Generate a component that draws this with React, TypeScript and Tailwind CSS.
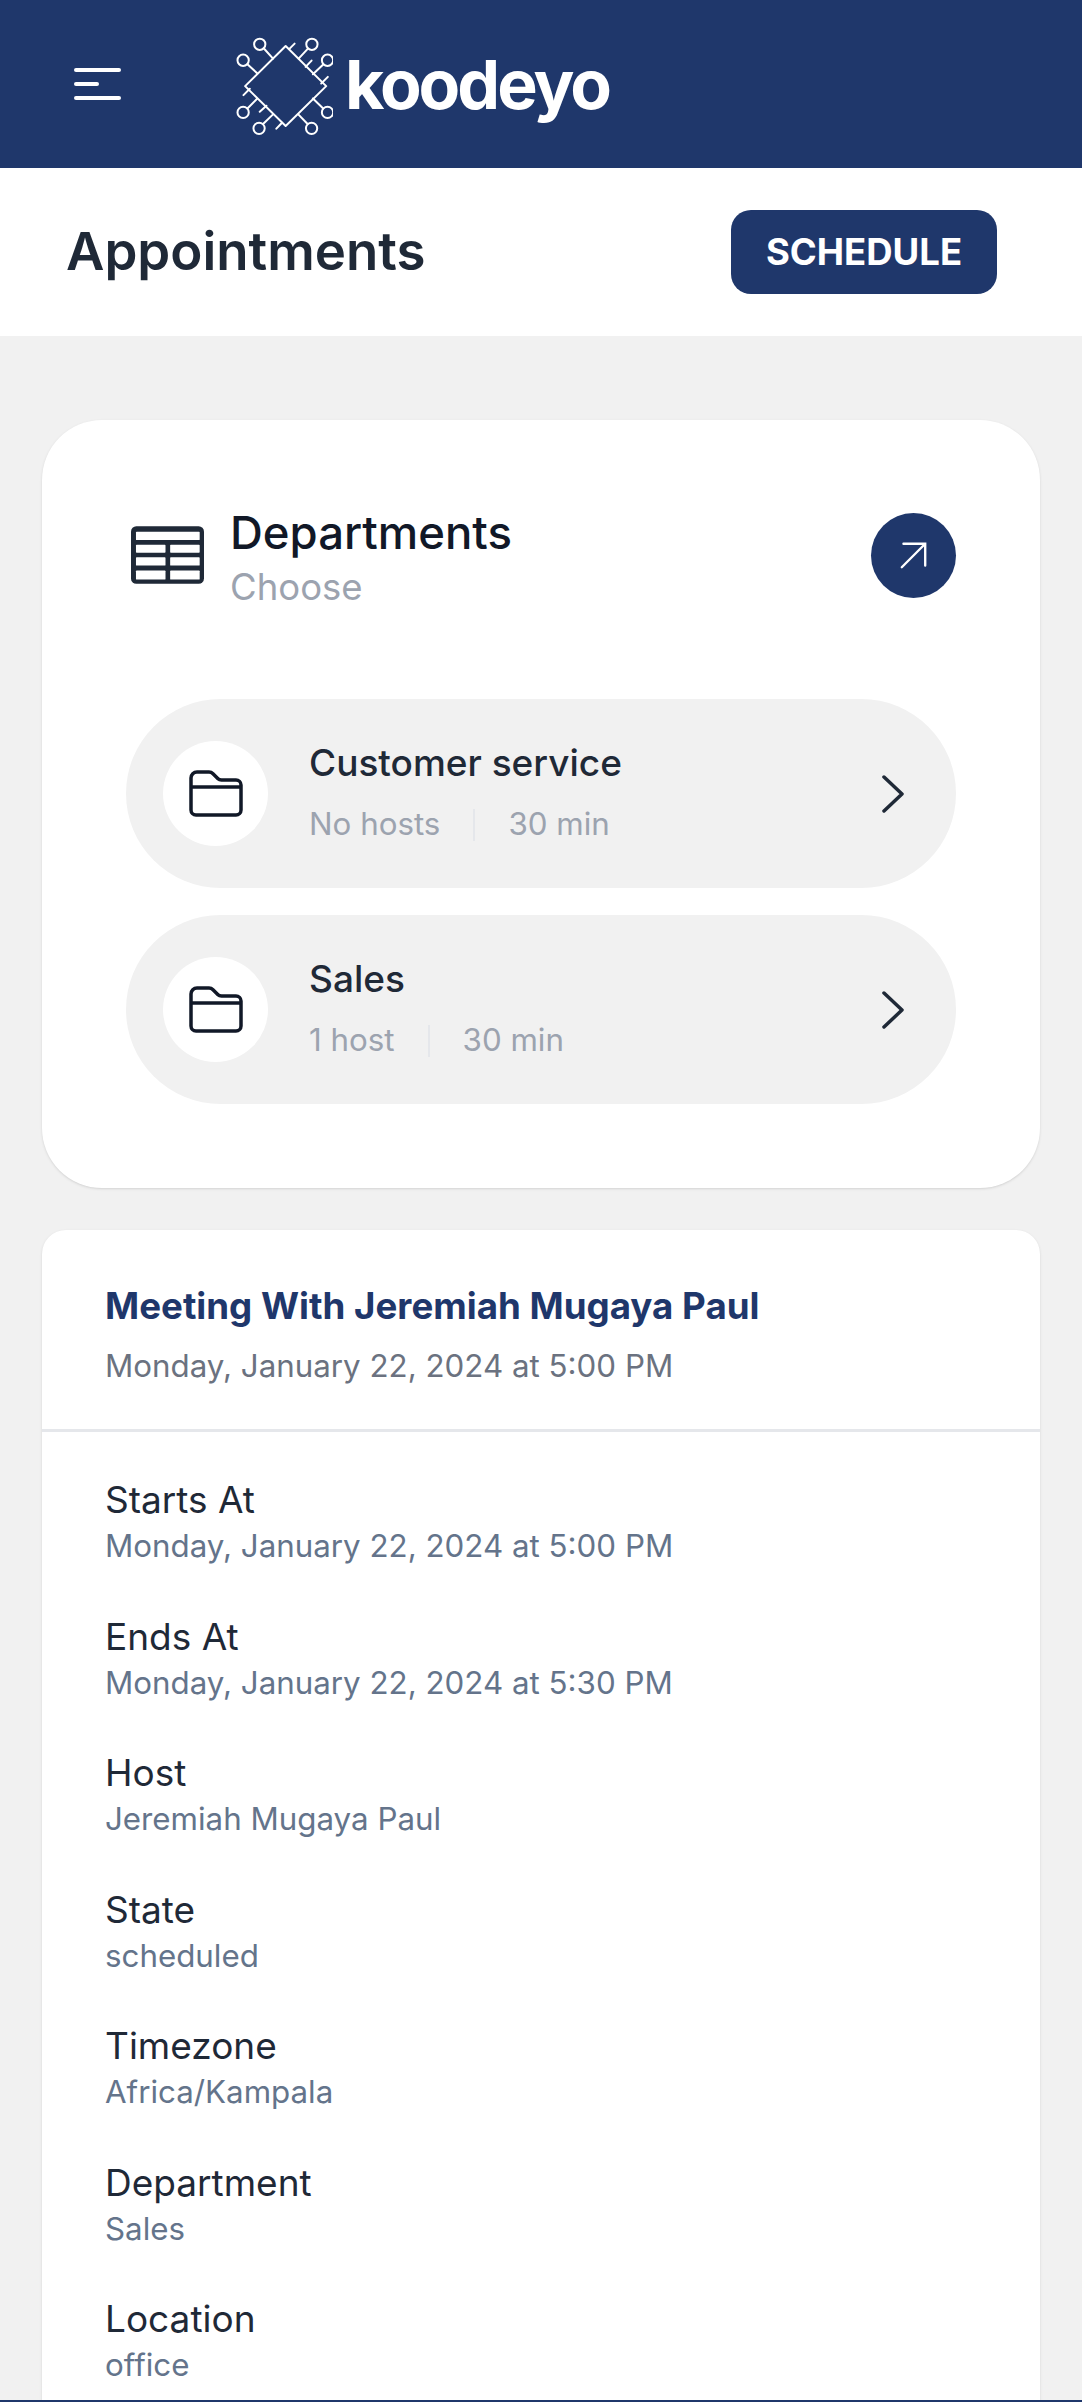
const details = [
  { label: "Starts At", value: "Monday, January 22, 2024 at 5:00 PM" },
  { label: "Ends At", value: "Monday, January 22, 2024 at 5:30 PM" },
  { label: "Host", value: "Jeremiah Mugaya Paul" },
  { label: "State", value: "scheduled" },
  { label: "Timezone", value: "Africa/Kampala" },
  { label: "Department", value: "Sales" },
  { label: "Location", value: "office" },
];

const departments = [
  { name: "Customer service", hosts: "No hosts", duration: "30 min" },
  { name: "Sales", hosts: "1 host", duration: "30 min" },
];

function LogoMark() {
  return (
    <svg viewBox="100 38 300 310" className="h-[103px] w-[100px] shrink-0" fill="none" stroke="white" strokeWidth="6" strokeLinecap="round">
      <path d="M258 77 L380 198 L258 318 L136 198 Z" strokeLinejoin="round" />
      <circle cx="180" cy="72" r="17" />
      <circle cx="130" cy="120" r="17" />
      <circle cx="337" cy="72" r="17" />
      <circle cx="384" cy="120" r="17" />
      <circle cx="130" cy="277" r="17" />
      <circle cx="178" cy="325" r="17" />
      <circle cx="336" cy="325" r="17" />
      <circle cx="384" cy="277" r="17" />
      <path d="M192 84 L220 115 M143 132 L173 160 M325 85 L297 115 M371 133 L340 162" />
      <path d="M371 265 L340 235 M324 312 L296 283 M143 265 L172 236 M190 312 L220 283" />
      <path d="M270 85 L285 70 M318 140 L336 121 M365 190 L385 170" />
      <path d="M131 225 L150 206 M180 275 L200 257 M230 326 L247 308" />
    </svg>
  );
}

function TableIcon() {
  return (
    <svg viewBox="303 348 220 174" className="h-[58px] w-[73px]">
      <rect x="303" y="348" width="220" height="174" rx="16" fill="#1f2937" />
      <g fill="white">
        <rect x="318" y="365" width="192" height="25" rx="2" />
        <rect x="318" y="404" width="89" height="24" rx="2" />
        <rect x="421" y="404" width="89" height="24" rx="2" />
        <rect x="318" y="442" width="89" height="25" rx="2" />
        <rect x="421" y="442" width="89" height="25" rx="2" />
        <rect x="318" y="482" width="89" height="27" rx="2" />
        <rect x="421" y="482" width="89" height="27" rx="2" />
      </g>
    </svg>
  );
}

function FolderIcon() {
  return (
    <svg viewBox="0 0 54 47" className="h-[47px] w-[54px]" fill="none" stroke="#111827" strokeWidth="3.5" strokeLinejoin="round">
      <path d="M2 8 a6 6 0 0 1 6-6 h12 c1.5 0 3 .7 4 1.7 l5 5 c1 1 2 1.3 3.5 1.3 H47 a5 5 0 0 1 5 5 V40 a5 5 0 0 1-5 5 H7 a5 5 0 0 1-5-5 Z" />
      <path d="M2 17 H52" />
    </svg>
  );
}

export default function App() {
  return (
    <div className="flex h-[2402px] flex-col overflow-hidden bg-[#f1f1f1] font-['Inter',sans-serif]">
      <header className="flex h-[168px] shrink-0 items-center bg-[#1f376b] pl-[74px]">
        <div className="flex w-[47px] flex-col gap-[10px]">
          <span className="h-[4px] w-full rounded-full bg-white" />
          <span className="h-[4px] w-[25px] rounded-full bg-white" />
          <span className="h-[4px] w-full rounded-full bg-white" />
        </div>
        <div className="ml-[112px]">
          <LogoMark />
        </div>
        <span className="ml-[12px] text-[68px] leading-none font-bold tracking-[-3px] text-white">koodeyo</span>
      </header>

      <div className="flex h-[168px] shrink-0 items-center justify-between bg-white pl-[66px] pr-[85px]">
        <h1 className="text-[52.8px] font-semibold text-[#1f2937]">Appointments</h1>
        <button className="h-[84px] w-[266px] rounded-[20px] bg-[#1f376b] text-[36.5px] font-bold text-white">SCHEDULE</button>
      </div>

      <main className="flex min-h-0 flex-1 flex-col gap-[42px] overflow-hidden px-[42px] pt-[84px]">
        <section className="shrink-0 rounded-[60px] bg-white px-[84px] pb-[84px] pt-[86px] shadow">
          <div className="flex items-start justify-between">
            <div className="flex items-start">
              <div className="ml-[5px] mt-[20px]">
                <TableIcon />
              </div>
              <div className="ml-[26px]">
                <h2 className="text-[45.5px] leading-[54px] font-medium text-[#111827]">Departments</h2>
                <p className="text-[36.5px] leading-[54px] text-[#9ca3af]">Choose</p>
              </div>
            </div>
            <div className="mt-[7px] h-[85px] w-[85px] rounded-full bg-[#1f376b]">
              <svg viewBox="33 38 254 254" className="h-full w-full" fill="none" stroke="white" strokeWidth="7" strokeLinecap="round">
                <path d="M125 200 L195 130 M130 130 H195 V195" />
              </svg>
            </div>
          </div>

          <div className="mt-[85px] flex flex-col gap-[27px]">
            {departments.map((d) => (
              <div key={d.name} className="flex h-[189px] items-center rounded-full bg-[#f1f1f1] pl-[37px] pr-[52px]">
                <div className="flex h-[105px] w-[105px] shrink-0 items-center justify-center rounded-full bg-white">
                  <FolderIcon />
                </div>
                <div className="ml-[41px] flex-1">
                  <p className="text-[37px] leading-[46px] font-medium text-[#1f2937]">{d.name}</p>
                  <div className="mt-[16px] flex h-[46px] items-center text-[31.3px] text-[#9ca3af]">
                    <span>{d.hosts}</span>
                    <span className="mx-[33px] h-[32px] w-[2px] bg-[#e5e7eb]" />
                    <span>{d.duration}</span>
                  </div>
                </div>
                <svg viewBox="0 0 22 38" className="h-[38px] w-[22px]" fill="none" stroke="#1f2937" strokeWidth="3.5" strokeLinecap="round" strokeLinejoin="round">
                  <path d="M2 2 L20 19 L2 36" />
                </svg>
              </div>
            ))}
          </div>
        </section>

        <section className="rounded-[24px] bg-white pb-[40px] shadow">
          <div className="border-b-[3px] border-[#e5e7eb] px-[63px] pb-[43px] pt-[48px]">
            <h3 className="text-[36.7px] leading-[56px] font-bold text-[#1f376b]">Meeting With Jeremiah Mugaya Paul</h3>
            <p className="mt-[12px] text-[31.3px] leading-[40px] text-[#6b7280]">Monday, January 22, 2024 at 5:00 PM</p>
          </div>
          <div className="flex flex-col gap-[44.5px] px-[63px] pt-[45px]">
            {details.map((d) => (
              <div key={d.label}>
                <p className="text-[37px] leading-[46px] text-[#1f2937]">{d.label}</p>
                <p className="text-[31.3px] leading-[46px] text-[#64748b]">{d.value}</p>
              </div>
            ))}
          </div>
        </section>
      </main>
      <div className="h-[2px] shrink-0 bg-[#1f376b]" />
    </div>
  );
}
